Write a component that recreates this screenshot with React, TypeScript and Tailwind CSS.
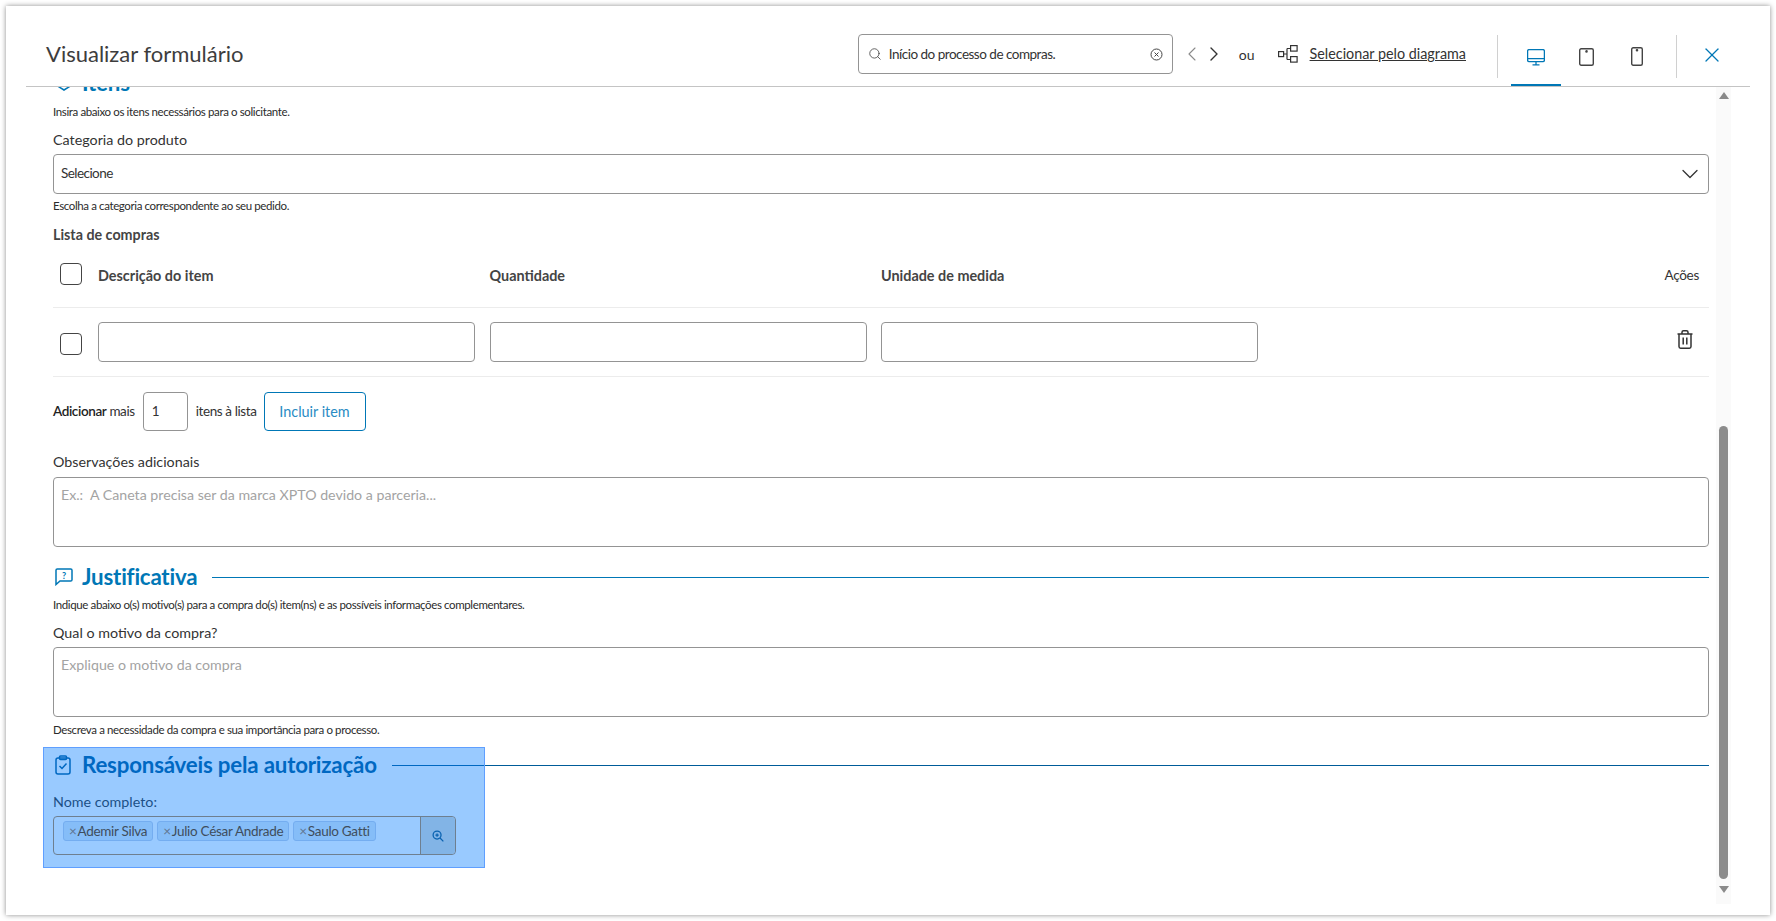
import React from "react";
import { X, ChevronLeft, ChevronRight, ChevronDown, Search } from "lucide-react";

const blue = "#0077b6";
const darkBlue = "#005c99";
const inputBox = "border border-[#949494] rounded-[4px] bg-white";

function Help({ children }: { children: React.ReactNode }) {
  return <p className="text-[11.5px] leading-[16px] tracking-[-0.38px] text-[#2b2b2b]">{children}</p>;
}

function Label({ children }: { children: React.ReactNode }) {
  return <p className="text-[14.3px] leading-[20px] text-[#333333]">{children}</p>;
}

function SectionHead({ icon, title, color = blue }: { icon: React.ReactNode; title: string; color?: string }) {
  return (
    <div className="flex items-center h-[32px]">
      <span className="w-[29px] flex items-center justify-start pl-[2px]" style={{ color }}>{icon}</span>
      <h2 className="text-[22.3px] leading-[32px] font-bold tracking-[-0.2px] whitespace-nowrap" style={{ color }}>{title}</h2>
      <div className="flex-1 h-px ml-[15px]" style={{ backgroundColor: color }} />
    </div>
  );
}

function Checkbox() {
  return <span className="block w-[22px] h-[22px] border border-[#444] rounded-[4px] bg-white" />;
}

function TextArea({ placeholder }: { placeholder: string }) {
  return (
    <div className={`${inputBox} h-[70px] px-[7px] py-[7px] text-[14.2px] leading-[20px] text-[#a3a3a3] whitespace-pre`}>{placeholder}</div>
  );
}

function Tag({ name }: { name: string }) {
  return (
    <span className="flex items-center h-[20px] px-[5px] rounded-[3px] border border-[#74adf0] bg-[#85bdf8] text-[13.5px] tracking-[-0.3px] text-[#3f4d5c] whitespace-nowrap">
      <span className="mr-[1px] text-[#5f7590]">×</span>{name}
    </span>
  );
}

export default function App() {
  return (
    <div className="w-[1776px] h-[921px] bg-white p-[6px] overflow-hidden font-['Lato','Liberation_Sans',sans-serif]">
      <div className="relative h-[909px] w-[1764px] bg-white shadow-[0_0_5px_rgba(0,0,0,0.45)] flex flex-col">
        {/* Header */}
        <header className="relative z-10 h-[81px] mx-[20px] pl-[20px] bg-white border-b border-[#c4c4c4] flex items-center shrink-0">
          <h1 className="text-[22px] leading-[28px] text-[#3d3d3d] mt-[16px]">Visualizar formulário</h1>
          <div className="ml-auto flex items-center mt-[16px]">
            <div className={`${inputBox} w-[315px] h-[40px] flex items-center pl-[9px] pr-[9px]`}>
              <Search size={14} strokeWidth={1.4} className="text-[#444]" />
              <span className="ml-[7px] text-[13.5px] tracking-[-0.5px] text-[#333]">Início do processo de compras.</span>
              <svg className="ml-auto" width="13" height="13" viewBox="0 0 13 13" fill="none" stroke="#444" strokeWidth="1">
                <circle cx="6.5" cy="6.5" r="5.5" />
                <path d="M4.5 4.5l4 4M8.5 4.5l-4 4" />
              </svg>
            </div>
            <ChevronLeft size={24} strokeWidth={1.1} className="ml-[7px] text-[#8a8a8a]" />
            <ChevronRight size={24} strokeWidth={1.4} className="-ml-[2px] text-[#333]" />
            <span className="ml-[13px] text-[14px] text-[#333]">ou</span>
            <svg className="ml-[23px]" width="20" height="18" viewBox="0 0 20 18" fill="none" stroke="#333" strokeWidth="1.2">
              <rect x="0.6" y="6.6" width="5" height="5" />
              <rect x="12.6" y="0.6" width="6.5" height="5.5" />
              <rect x="12.6" y="11.6" width="6.5" height="5.5" />
              <path d="M5.6 9h3.5M9 3.5h3.5M9 14.5h3.5M9 3.5v11" />
            </svg>
            <a className="ml-[12px] text-[14.35px] underline text-[#333] whitespace-nowrap">Selecionar pelo diagrama</a>
            <div className="ml-[31px] w-px h-[43px] bg-[#d0d0d0] mt-[5px]" />
            <div className="relative ml-[13px] w-[50px] h-[44px] flex items-center justify-center mt-[5px]">
              <svg className="mt-[2px]" width="18" height="17" viewBox="0 0 18 17" fill="none" stroke={blue} strokeWidth="1.3">
                <rect x="0.6" y="0.6" width="16.8" height="12" rx="1.5" />
                <path d="M0.6 9.6h16.8M9 12.6v3M5.5 15.8h7" />
              </svg>
              <span className="absolute left-0 right-0 -bottom-[7px] h-[2px] bg-[#0077b6]" />
            </div>
            <div className="w-[51px] flex justify-center mt-[5px]">
              <svg width="15" height="18" viewBox="0 0 15 18" fill="none" stroke="#444" strokeWidth="1.4">
                <rect x="0.7" y="0.7" width="13.6" height="16.6" rx="1.5" />
                <circle cx="7.5" cy="3.4" r="0.6" fill="#444" />
              </svg>
            </div>
            <div className="w-[49px] flex justify-center mt-[5px]">
              <svg width="12" height="19" viewBox="0 0 12 19" fill="none" stroke="#444" strokeWidth="1.4">
                <rect x="0.7" y="0.7" width="10.6" height="17.6" rx="1.5" />
                <circle cx="6" cy="3.2" r="0.6" fill="#444" />
              </svg>
            </div>
            <div className="ml-[15px] w-px h-[43px] bg-[#d0d0d0] mt-[5px]" />
            <X size={24} strokeWidth={1.3} className="ml-[23px] mr-[26px] text-[#0077b6] mt-[2px]" />
          </div>
        </header>

        {/* Scrollable body */}
        <div className="flex-1 flex overflow-hidden pl-[47px]">
          <main className="w-[1656px] shrink-0 -mt-[20px]">
            <SectionHead
              title="Itens"
              icon={
                <svg width="18" height="18" viewBox="0 0 18 18" fill="none" stroke="currentColor" strokeWidth="1.5">
                  <path d="M1 7l8 5 8-5M1 11l8 5 8-5" />
                </svg>
              }
            />
            <div className="mt-[5px]"><Help>Insira abaixo os itens necessários para o solicitante.</Help></div>
            <div className="mt-[10px]"><Label>Categoria do produto</Label></div>
            <div className={`${inputBox} mt-[4px] h-[40px] flex items-center pl-[7px] pr-[4px] text-[13.5px] tracking-[-0.55px] text-[#333]`}>
              <span className="-mt-[2px]">Selecione</span>
              <ChevronDown size={28} strokeWidth={1.1} className="ml-auto text-[#333]" />
            </div>
            <div className="mt-[4px]"><Help>Escolha a categoria correspondente ao seu pedido.</Help></div>
            <p className="mt-[11px] text-[14.3px] leading-[20px] font-bold text-[#444]">Lista de compras</p>

            {/* Table */}
            <div className="h-[63px] grid grid-cols-[45px_391.5px_391.5px_1fr_auto] items-center border-b border-[#ececec] pb-[1px] text-[14.4px] font-bold text-[#444]">
              <span className="pl-[7px] -mt-[3px]"><Checkbox /></span>
              <span>Descrição do item</span>
              <span>Quantidade</span>
              <span>Unidade de medida</span>
              <span className="pr-[10px] font-normal text-[13.5px] tracking-[-0.3px] text-[#333]">Ações</span>
            </div>
            <div className="h-[69px] grid grid-cols-[45px_391.5px_391.5px_1fr_auto] items-center border-b border-[#ececec]">
              <span className="pl-[7px] mt-[4px]"><Checkbox /></span>
              <div className={`${inputBox} w-[377px] h-[40px]`} />
              <div className={`${inputBox} w-[377px] h-[40px]`} />
              <div className={`${inputBox} w-[377px] h-[40px]`} />
              <svg className="mr-[16px] -mt-[5px]" width="16" height="19" viewBox="0 0 16 19" fill="none" stroke="#333" strokeWidth="1.5">
                <path d="M0.5 4h15M5 4V2.2C5 1.3 5.7 0.8 6.5 0.8h3c.8 0 1.5.5 1.5 1.4V4M2 4v12.5c0 .9.7 1.7 1.6 1.7h8.8c.9 0 1.6-.8 1.6-1.7V4M6.2 7.5v7M9.8 7.5v7" />
              </svg>
            </div>

            {/* Add row */}
            <div className="mt-[15px] flex items-start h-[40px]">
              <span className="mt-[9px] text-[13.5px] leading-[20px] tracking-[-0.4px] text-[#333]"><span className="font-semibold text-[#222]">Adicionar</span> mais</span>
              <div className={`${inputBox} ml-[8px] w-[45px] h-[39px] flex items-center pl-[8px] text-[13.5px] text-[#333]`}>1</div>
              <span className="ml-[8px] mt-[9px] text-[13.5px] leading-[20px] tracking-[-0.4px] text-[#333]">itens à lista</span>
              <button className="ml-[7px] w-[102px] h-[39px] border border-[#0077b6] rounded-[4px] text-[14.4px] text-[#2a8cc4]">Incluir item</button>
            </div>

            <div className="mt-[20px]"><Label>Observações adicionais</Label></div>
            <div className="mt-[5px]"><TextArea placeholder="Ex.:  A Caneta precisa ser da marca XPTO devido a parceria..." /></div>

            <div className="mt-[14px]">
              <SectionHead
                title="Justificativa"
                icon={
                  <svg width="18" height="18" viewBox="0 0 18 18" fill="none" stroke="currentColor" strokeWidth="1.5">
                    <path d="M1 2.3C1 1.5 1.6 1 2.3 1h13.4c.7 0 1.3.5 1.3 1.3v9.4c0 .8-.6 1.3-1.3 1.3H5L1 16.5z" />
                    <text x="9" y="10.5" textAnchor="middle" fontSize="9" fontWeight="700" fill="currentColor" stroke="none">?</text>
                  </svg>
                }
              />
            </div>
            <div className="mt-[4px]"><Help>Indique abaixo o(s) motivo(s) para a compra do(s) item(ns) e as possíveis informações complementares.</Help></div>
            <div className="mt-[10px]"><Label>Qual o motivo da compra?</Label></div>
            <div className="mt-[4px]"><TextArea placeholder="Explique o motivo da compra" /></div>
            <div className="mt-[5px]"><Help>Descreva a necessidade da compra e sua importância para o processo.</Help></div>

            {/* Highlighted section */}
            <section className="relative mt-[11px]">
              <SectionHead
                title="Responsáveis pela autorização"
                color={darkBlue}
                icon={
                  <svg width="16" height="20" viewBox="0 0 16 20" fill="none" stroke="currentColor" strokeWidth="1.5">
                    <rect x="1" y="3" width="14" height="16" rx="2" />
                    <rect x="4.5" y="1" width="7" height="3.5" rx="1" />
                    <path d="M4.5 11l2.5 2.5 4.5-5" />
                  </svg>
                }
              />
              <div className="mt-[11px]"><Label>Nome completo:</Label></div>
              <div className={`${inputBox} relative z-10 mt-[4px] w-[403px] h-[39px] flex !bg-transparent !border-[#6e7f90]`}>
                <div className="flex-1 flex items-start gap-[4px] pl-[9px] pt-[4px]">
                  <Tag name="Ademir Silva" />
                  <Tag name="Julio César Andrade" />
                  <Tag name="Saulo Gatti" />
                </div>
                <div className="w-[35px] border-l border-[#6e7f90] bg-[#82b4e6] rounded-r-[4px] flex items-center justify-center">
                  <svg width="12" height="12" viewBox="0 0 13 13" fill="none" stroke="#0a62b0" strokeWidth="1.4">
                    <circle cx="5.5" cy="5.5" r="4.3" />
                    <path d="M8.7 8.7l3.6 3.6M3.7 5.5h3.6M5.5 3.7v3.6" />
                  </svg>
                </div>
              </div>
              <div className="absolute -left-[10px] -top-[2px] w-[442px] h-[121px] bg-[#007bff66] border border-[#5f9fff]" />
            </section>
          </main>

          {/* Scrollbar */}
          <div className="ml-[7px] w-[15px] h-[817px] bg-[#fafafa] flex flex-col items-center shrink-0">
            <span className="mt-[5px] w-0 h-0 border-x-[5px] border-x-transparent border-b-[7px] border-b-[#8a8a8a]" />
            <span className="mt-[327px] w-[9px] h-[453px] rounded-full bg-[#8c8c8c]" />
            <span className="mt-[7px] w-0 h-0 border-x-[5px] border-x-transparent border-t-[7px] border-t-[#8a8a8a]" />
          </div>
        </div>
      </div>
    </div>
  );
}
